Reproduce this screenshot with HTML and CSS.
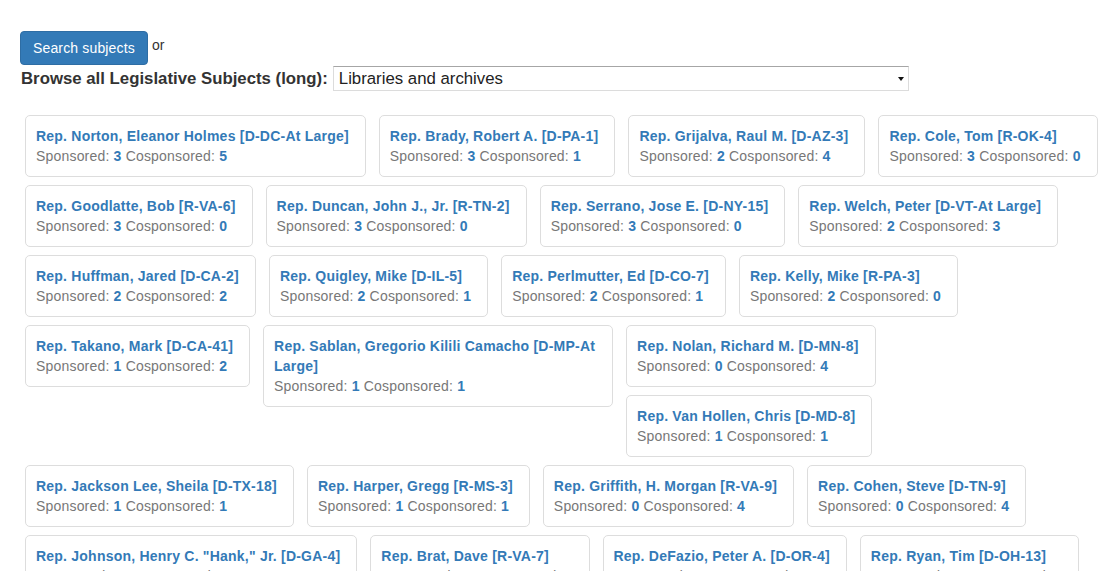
FILE: index.html
```html
<!DOCTYPE html>
<html lang="en">
<head>
<meta charset="utf-8">
<title>Legislative Subjects</title>
<link rel="stylesheet" href="styles.css">
</head>
<body>
<div class="page">
  <div class="search-line">
    <button class="btn-primary" type="button">Search subjects</button> <span class="or">or</span>
  </div>
  <div class="browse-line">
    <label class="browse-label" for="subj">Browse all Legislative Subjects (long):</label>
    <span class="select-wrap">
      <select id="subj" class="subject-select">
        <option>Libraries and archives</option>
      </select>
      <span class="select-caret"></span>
    </span>
  </div>

  <div class="members">
    <div class="row">
      <div class="card"><a class="name" href="#">Rep. Norton, Eleanor Holmes [D-DC-At Large]</a><div class="counts">Sponsored: <b>3</b> Cosponsored: <b>5</b></div></div>
      <div class="card"><a class="name" href="#">Rep. Brady, Robert A. [D-PA-1]</a><div class="counts">Sponsored: <b>3</b> Cosponsored: <b>1</b></div></div>
      <div class="card"><a class="name" href="#">Rep. Grijalva, Raul M. [D-AZ-3]</a><div class="counts">Sponsored: <b>2</b> Cosponsored: <b>4</b></div></div>
      <div class="card"><a class="name" href="#">Rep. Cole, Tom [R-OK-4]</a><div class="counts">Sponsored: <b>3</b> Cosponsored: <b>0</b></div></div>
    </div>
    <div class="row">
      <div class="card"><a class="name" href="#">Rep. Goodlatte, Bob [R-VA-6]</a><div class="counts">Sponsored: <b>3</b> Cosponsored: <b>0</b></div></div>
      <div class="card"><a class="name" href="#">Rep. Duncan, John J., Jr. [R-TN-2]</a><div class="counts">Sponsored: <b>3</b> Cosponsored: <b>0</b></div></div>
      <div class="card"><a class="name" href="#">Rep. Serrano, Jose E. [D-NY-15]</a><div class="counts">Sponsored: <b>3</b> Cosponsored: <b>0</b></div></div>
      <div class="card"><a class="name" href="#">Rep. Welch, Peter [D-VT-At Large]</a><div class="counts">Sponsored: <b>2</b> Cosponsored: <b>3</b></div></div>
    </div>
    <div class="row">
      <div class="card"><a class="name" href="#">Rep. Huffman, Jared [D-CA-2]</a><div class="counts">Sponsored: <b>2</b> Cosponsored: <b>2</b></div></div>
      <div class="card"><a class="name" href="#">Rep. Quigley, Mike [D-IL-5]</a><div class="counts">Sponsored: <b>2</b> Cosponsored: <b>1</b></div></div>
      <div class="card"><a class="name" href="#">Rep. Perlmutter, Ed [D-CO-7]</a><div class="counts">Sponsored: <b>2</b> Cosponsored: <b>1</b></div></div>
      <div class="card"><a class="name" href="#">Rep. Kelly, Mike [R-PA-3]</a><div class="counts">Sponsored: <b>2</b> Cosponsored: <b>0</b></div></div>
    </div>
    <div class="row">
      <div class="card"><a class="name" href="#">Rep. Takano, Mark [D-CA-41]</a><div class="counts">Sponsored: <b>1</b> Cosponsored: <b>2</b></div></div>
      <div class="card"><a class="name" href="#">Rep. Sablan, Gregorio Kilili Camacho [D-MP-At Large]</a><div class="counts">Sponsored: <b>1</b> Cosponsored: <b>1</b></div></div>
      <div class="stack">
        <div class="card"><a class="name" href="#">Rep. Nolan, Richard M. [D-MN-8]</a><div class="counts">Sponsored: <b>0</b> Cosponsored: <b>4</b></div></div>
        <div class="card"><a class="name" href="#">Rep. Van Hollen, Chris [D-MD-8]</a><div class="counts">Sponsored: <b>1</b> Cosponsored: <b>1</b></div></div>
      </div>
    </div>
    <div class="row">
      <div class="card"><a class="name" href="#">Rep. Jackson Lee, Sheila [D-TX-18]</a><div class="counts">Sponsored: <b>1</b> Cosponsored: <b>1</b></div></div>
      <div class="card"><a class="name" href="#">Rep. Harper, Gregg [R-MS-3]</a><div class="counts">Sponsored: <b>1</b> Cosponsored: <b>1</b></div></div>
      <div class="card"><a class="name" href="#">Rep. Griffith, H. Morgan [R-VA-9]</a><div class="counts">Sponsored: <b>0</b> Cosponsored: <b>4</b></div></div>
      <div class="card"><a class="name" href="#">Rep. Cohen, Steve [D-TN-9]</a><div class="counts">Sponsored: <b>0</b> Cosponsored: <b>4</b></div></div>
    </div>
    <div class="row">
      <div class="card"><a class="name" href="#">Rep. Johnson, Henry C. "Hank," Jr. [D-GA-4]</a><div class="counts">Sponsored: <b>1</b> Cosponsored: <b>0</b></div></div>
      <div class="card"><a class="name" href="#">Rep. Brat, Dave [R-VA-7]</a><div class="counts">Sponsored: <b>1</b> Cosponsored: <b>0</b></div></div>
      <div class="card"><a class="name" href="#">Rep. DeFazio, Peter A. [D-OR-4]</a><div class="counts">Sponsored: <b>1</b> Cosponsored: <b>0</b></div></div>
      <div class="card"><a class="name" href="#">Rep. Ryan, Tim [D-OH-13]</a><div class="counts">Sponsored: <b>1</b> Cosponsored: <b>0</b></div></div>
    </div>
  </div>
</div>
</body>
</html>
```

FILE: styles.css
```css
* { box-sizing: border-box; }

html, body {
  margin: 0;
  padding: 0;
  background: #fff;
}

body {
  font-family: "Liberation Sans", Arial, Helvetica, sans-serif;
  font-size: 14px;
  line-height: 20px;
  color: #333;
  letter-spacing: 0.15px;
}

.page {
  padding: 31px 20px 0 20px;
}

.search-line {
  height: 34px;
}

.btn-primary {
  display: inline-block;
  vertical-align: top;
  height: 34px;
  padding: 6px 12px;
  font-family: inherit;
  font-size: 14px;
  line-height: 20px;
  letter-spacing: 0.15px;
  color: #fff;
  background: #337ab7;
  border: 1px solid #2e6da4;
  border-radius: 4px;
  cursor: pointer;
}

.or {
  display: inline-block;
  vertical-align: top;
  line-height: 28px;
}

.browse-line {
  display: flex;
  align-items: center;
  height: 25px;
  margin-top: 1px;
}

.browse-label {
  font-weight: bold;
  font-size: 16.8px;
  letter-spacing: 0;
  color: #333;
  margin-left: 1px;
  margin-right: 5px;
}

.select-wrap {
  position: relative;
  display: inline-block;
}

.subject-select {
  -webkit-appearance: none;
  appearance: none;
  display: block;
  width: 576px;
  height: 25px;
  padding: 0 20px 1px 5px;
  font-family: inherit;
  font-size: 16.8px;
  letter-spacing: 0;
  color: #222;
  background: #fff;
  border: 1px solid #dcdcdc;
  border-top-color: #a6a6a6;
  border-radius: 0;
  outline: none;
}

.select-caret {
  position: absolute;
  right: 5px;
  top: 11px;
  width: 0;
  height: 0;
  border-left: 3.5px solid transparent;
  border-right: 3.5px solid transparent;
  border-top: 4px solid #111;
  pointer-events: none;
}

.members {
  margin-top: 24px;
  padding-left: 5px;
}

.row {
  display: flex;
  align-items: flex-start;
}

.stack {
  display: flex;
  flex-direction: column;
  align-items: flex-start;
}

.card {
  flex: none;
  max-width: 350px;
  margin: 0 13px 8px 0;
  padding: 10px 16px 10px 10px;
  border: 1px solid #ddd;
  border-radius: 5px;
  background: #fff;
}

.name {
  display: block;
  font-weight: bold;
  letter-spacing: 0.22px;
  color: #337ab7;
  text-decoration: none;
}

.counts {
  color: #777;
  white-space: nowrap;
  letter-spacing: 0.19px;
}

.counts b {
  color: #337ab7;
}
```
